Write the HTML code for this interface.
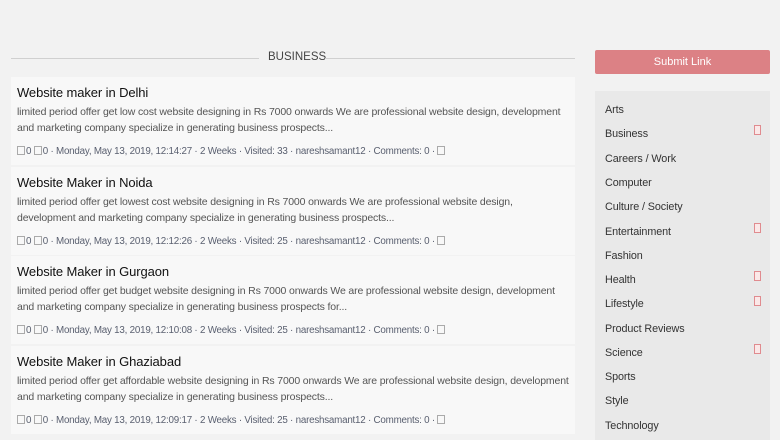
<!DOCTYPE html>
<html><head><style>
html,body{margin:0;width:780px;height:440px;overflow:hidden}
body{background:#f2f2f2;font-family:"Liberation Sans",sans-serif;position:relative}
.hd{position:absolute;left:11px;top:51px;width:564px;height:16px}
.hd .l{position:absolute;top:7px;height:1px;background:#d0d0d0}
.hd span{position:absolute;left:257px;top:0;font-size:11.5px;color:#444}
.card{position:absolute;left:11px;width:564px;height:88px;background:#f8f8f8}
.card h3{position:absolute;left:6px;top:8px;margin:0;font-size:13px;font-weight:normal;color:#111;letter-spacing:-.1px}
.card p{position:absolute;left:6px;top:27px;margin:0;width:554px;font-size:10.5px;line-height:16px;color:#555;letter-spacing:-.15px}
.card .m{position:absolute;left:6px;top:69px;font-size:9.8px;color:#5a6070;letter-spacing:-.22px}
.ic{display:inline-block;width:6px;height:7px;border:1px solid #aaa;vertical-align:-1px;margin-right:1px}
.btn{position:absolute;left:595px;top:50px;width:175px;height:24px;background:#dc8185;border-radius:2px;color:#fff;font-size:11px;text-align:center;line-height:24px}
.side{position:absolute;left:595px;top:91px;width:175px;height:360px;background:#e9e9e9}
.side div{position:absolute;left:10px;font-size:10.8px;color:#333;letter-spacing:-.1px}
.b{position:absolute;left:159px;width:5px;height:8px;border:1px solid #e08b8f;background:#fbe8e8}
</style></head><body>
<div class="hd"><div class="l" style="left:0;width:248px"></div><span>BUSINESS</span><div class="l" style="left:314px;width:250px"></div></div>
<div class="card" style="top:77px"><h3>Website maker in Delhi</h3><p>limited period offer get low cost website designing in Rs 7000 onwards We are professional website design, development and marketing company specialize in generating business prospects...</p><div class="m"><span class="ic"></span>0 <span class="ic"></span>0 · Monday, May 13, 2019, 12:14:27 · 2 Weeks · Visited: 33 · nareshsamant12 · Comments: 0 · <span class="ic"></span></div></div>
<div class="card" style="top:167px"><h3>Website Maker in Noida</h3><p>limited period offer get lowest cost website designing in Rs 7000 onwards We are professional website design,<br>development and marketing company specialize in generating business prospects...</p><div class="m"><span class="ic"></span>0 <span class="ic"></span>0 · Monday, May 13, 2019, 12:12:26 · 2 Weeks · Visited: 25 · nareshsamant12 · Comments: 0 · <span class="ic"></span></div></div>
<div class="card" style="top:256px"><h3>Website Maker in Gurgaon</h3><p>limited period offer get budget website designing in Rs 7000 onwards We are professional website design, development<br>and marketing company specialize in generating business prospects for...</p><div class="m"><span class="ic"></span>0 <span class="ic"></span>0 · Monday, May 13, 2019, 12:10:08 · 2 Weeks · Visited: 25 · nareshsamant12 · Comments: 0 · <span class="ic"></span></div></div>
<div class="card" style="top:346px"><h3>Website Maker in Ghaziabad</h3><p>limited period offer get affordable website designing in Rs 7000 onwards We are professional website design, development<br>and marketing company specialize in generating business prospects...</p><div class="m"><span class="ic"></span>0 <span class="ic"></span>0 · Monday, May 13, 2019, 12:09:17 · 2 Weeks · Visited: 25 · nareshsamant12 · Comments: 0 · <span class="ic"></span></div></div>
<div class="btn">Submit Link</div>
<div class="side">
<div style="top:13px">Arts</div>
<div style="top:37px">Business</div><span class="b" style="top:34px"></span>
<div style="top:62px">Careers / Work</div>
<div style="top:86px">Computer</div>
<div style="top:110px">Culture / Society</div>
<div style="top:135px">Entertainment</div><span class="b" style="top:132px"></span>
<div style="top:159px">Fashion</div>
<div style="top:183px">Health</div><span class="b" style="top:180px"></span>
<div style="top:207px">Lifestyle</div><span class="b" style="top:205px"></span>
<div style="top:232px">Product Reviews</div>
<div style="top:256px">Science</div><span class="b" style="top:253px"></span>
<div style="top:280px">Sports</div>
<div style="top:304px">Style</div>
<div style="top:329px">Technology</div>
</div>
</body></html>
